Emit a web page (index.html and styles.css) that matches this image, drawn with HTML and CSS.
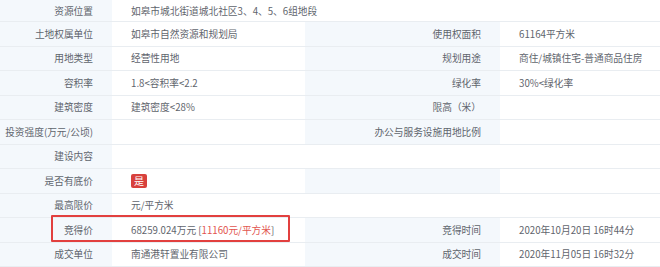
FILE: index.html
```html
<!DOCTYPE html>
<html lang="zh">
<head>
<meta charset="utf-8">
<link rel="stylesheet" href="styles.css">
</head>
<body>
<div class="wrap">
  <div class="grid">
    <div class="lab first">资源位置</div><div class="val span3 first">如皋市城北街道城北社区3、4、5、6组地段</div>

    <div class="lab">土地权属单位</div><div class="val">如皋市自然资源和规划局</div><div class="lab">使用权面积</div><div class="val">61164平方米</div>

    <div class="lab">用地类型</div><div class="val">经营性用地</div><div class="lab">规划用途</div><div class="val">商住/城镇住宅-普通商品住房</div>

    <div class="lab">容积率</div><div class="val">1.8&lt;容积率&lt;2.2</div><div class="lab">绿化率</div><div class="val">30%&lt;绿化率</div>

    <div class="lab">建筑密度</div><div class="val">建筑密度&lt;28%</div><div class="lab">限高（米）</div><div class="val"></div>

    <div class="lab">投资强度(万元/公顷)</div><div class="val"></div><div class="lab">办公与服务设施用地比例</div><div class="val"></div>

    <div class="lab">建设内容</div><div class="val span3"></div>

    <div class="lab">是否有底价</div><div class="val"><span class="badge">是</span></div><div class="lab"></div><div class="val"></div>

    <div class="lab">最高限价</div><div class="val span3">元/平方米</div>

    <div class="lab">竞得价</div><div class="val">68259.024万元 [ <span class="red">11160元/平方米</span>]</div><div class="lab">竞得时间</div><div class="val">2020年10月20日 16时44分</div>

    <div class="lab">成交单位</div><div class="val">南通港轩置业有限公司</div><div class="lab">成交时间</div><div class="val">2020年11月05日 16时32分</div>
  </div>
  <div class="highlight"></div>
</div>
</body>
</html>
```

FILE: styles.css
```css
html, body {
  margin: 0;
  padding: 0;
  background: #ffffff;
}
.wrap {
  position: relative;
  width: 660px;
  height: 267px;
  overflow: hidden;
  font-family: "Noto Sans CJK SC", "Noto Sans", sans-serif;
  font-size: 9.7px;
  color: #5f656d;
}
.grid {
  display: grid;
  grid-template-columns: 112px 193px 195px 160px;
  grid-template-rows: 22px;
  grid-auto-rows: 24.5px;
}
.grid > div {
  box-sizing: border-box;
  border-bottom: 1px solid #e9edf1;
  display: flex;
  align-items: center;
  white-space: nowrap;
  overflow: hidden;
}
.lab {
  background: #f4f8fc;
  justify-content: flex-end;
  padding-right: 19px;
}
.val {
  background: #ffffff;
  padding-left: 19px;
}
.span3 {
  grid-column: span 3;
}
.badge {
  display: inline-block;
  background: #d8413d;
  color: #ffffff;
  font-size: 10px;
  line-height: 14px;
  padding: 0 3px;
  border-radius: 2px;
}
.red {
  color: #e2544e;
}
.highlight {
  position: absolute;
  left: 51px;
  top: 215px;
  width: 239px;
  height: 27px;
  box-sizing: border-box;
  border: 2px solid #e2403f;
  border-radius: 1px;
}
```
